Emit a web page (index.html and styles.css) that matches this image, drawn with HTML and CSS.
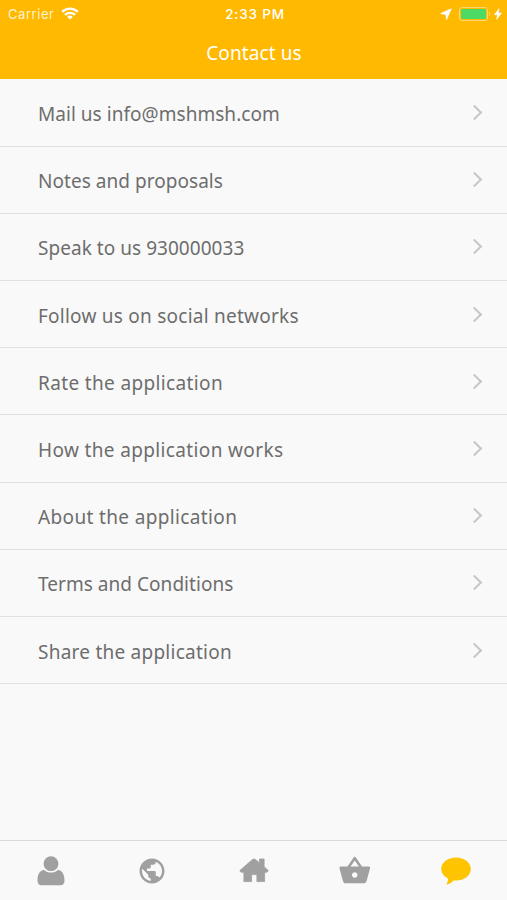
FILE: index.html
```html
<!DOCTYPE html>
<html lang="en">
<head>
    <meta charset="UTF-8">
    <meta name="viewport" content="width=device-width, initial-scale=1.0">
    <title>Contact us</title>
    <link rel="stylesheet" href="styles.css">
</head>
<body>
    <header class="header">
        <div class="status">
            <div class="status-left">
                <span>Carrier</span>
                <svg width="18" height="13" viewBox="0 0 18 13" fill="none" stroke="#fff" stroke-width="2.3">
                    <path d="M1.2 4.9a11 11 0 0 1 15.6 0M4 7.9a7.1 7.1 0 0 1 10 0"/>
                    <path d="M9 12.6L6.2 9.9a4 4 0 0 1 5.6 0z" fill="#fff" stroke="none"/>
                </svg>
            </div>
            <span class="time">2:33 PM</span>
            <div class="status-right">
                <svg class="location" width="12" height="12" viewBox="0 0 12 12" fill="#fff" stroke="#fff" stroke-width=".7" stroke-linejoin="round">
                    <path d="M11.3.7L.6 5.600l5.200.8.8 5.200z"/>
                </svg>
                <svg width="32" height="14" viewBox="0 0 32 14">
                    <rect x=".5" y=".5" width="28" height="13" rx="2.5" fill="none" stroke="#ffd970"/>
                    <rect x="2" y="2" width="25" height="10" rx="1" fill="#4cd964"/>
                    <path d="M30 5v4q1.400-.6 1.400-2T30 5z" fill="#ffd970"/>
                </svg>
                <svg width="8" height="12" viewBox="0 0 8 12" fill="#fff" stroke="#fff" stroke-width=".5">
                    <path d="M5 .5L.4 6.700h3L2.600 11.500 7.600 5h-3z"/>
                </svg>
            </div>
        </div>
        <h1>Contact us</h1>
    </header>

    <main class="list">
        <a class="row tight"><span>Mail us info@mshmsh.com</span><i class="arrow"></i></a>
        <a class="row tight"><span>Notes and proposals</span><i class="arrow"></i></a>
        <a class="row tight"><span>Speak to us 930000033</span><i class="arrow"></i></a>
        <a class="row"><span>Follow us on social networks</span><i class="arrow"></i></a>
        <a class="row wide"><span>Rate the application</span><i class="arrow"></i></a>
        <a class="row wide"><span>How the application works</span><i class="arrow"></i></a>
        <a class="row wide"><span>About the application</span><i class="arrow"></i></a>
        <a class="row tight"><span>Terms and Conditions</span><i class="arrow"></i></a>
        <a class="row"><span>Share the application</span><i class="arrow"></i></a>
    </main>

    <nav class="tabs">
        <a class="tab">
            <svg width="28" height="30" viewBox="0 0 28 30">
                <path d="M7 14c1.800 1.700 4.200 2.600 7 2.600s5.200-.9 7-2.600c4.500.2 6.500 5 6.500 10.500 0 3-1.500 4.800-4 4.800h-19C2 29.300.5 27.500.5 24.500.5 19 2.500 14.200 7 14z"/>
                <circle cx="14" cy="7.700" r="7.400"/>
            </svg>
        </a>
        <a class="tab">
            <svg width="30" height="30" viewBox="0 0 24 24">
                <path d="M12 2C6.480 2 2 6.480 2 12s4.480 10 10 10 10-4.480 10-10S17.520 2 12 2zm-1 17.930c-3.950-.49-7-3.850-7-7.930 0-.62.080-1.210.21-1.790L9 15v1c0 1.100.9 2 2 2v1.930zm6.900-2.540c-.26-.81-1-1.390-1.900-1.390h-1v-3c0-.55-.45-1-1-1H8v-2h2c.55 0 1-.45 1-1V7h2c1.100 0 2-.9 2-2v-.41c2.930 1.190 5 4.060 5 7.410 0 2.080-.8 3.970-2.100 5.390z"/>
            </svg>
        </a>
        <a class="tab">
            <svg width="30" height="25" viewBox="0 0 30 25" stroke="#a0a0a0" stroke-width=".8" stroke-linejoin="round">
                <path d="M.8 12.600L13.500 1.500q1.500-1.100 3 0l4 3.400V1h4.600v7.800l4.200 3.800-1.300 1.600H25.600v9.400h-7.700V16.600h-5.300v7H4.900v-9.400H2z"/>
            </svg>
        </a>
        <a class="tab">
            <svg width="33.500" height="33.500" viewBox="0 0 24 24">
                <path d="M17.210 9l-4.380-6.560c-.19-.28-.51-.42-.83-.42-.32 0-.64.140-.83.430L6.790 9H2c-.55 0-1 .45-1 1 0 .09.010.18.040.27l2.540 9.270c.23.840 1 1.460 1.920 1.460h13c.92 0 1.690-.62 1.930-1.460l2.540-9.270L23 10c0-.55-.45-1-1-1h-4.790zM9 9l3-4.400L15 9H9zm3 8c-1.100 0-2-.9-2-2s.9-2 2-2 2 .9 2 2-.9 2-2 2z"/>
            </svg>
        </a>
        <a class="tab active">
            <svg width="30" height="28" viewBox="0 0 30 28">
                <path d="M15 .6C23.300.6 29.800 5.700 29.800 12S23.300 23.600 15 23.600q-1.300 0-2.400-.2-2.600 3.200-6.300 4c-.7.100-.9-.3-.5-.9q1.300-1.900 1.400-4.800C3 19.600.2 16 .2 12 .2 5.700 6.700.6 15 .6z"/>
            </svg>
        </a>
    </nav>
</body>
</html>
```

FILE: styles.css
```css
body {
    margin: 0;
    height: 900px;
    display: flex;
    flex-direction: column;
    background: #f9f9f9;
    font-family: "Noto Sans", "Open Sans", sans-serif;
}
.header {
    height: 79px;
    background: #ffb900;
    color: #fff;
}
.status {
    display: grid;
    grid-template-columns: 1fr auto 1fr;
    align-items: center;
    height: 27px;
    padding: 0 5px 0 8px;
    font-family: Inter, sans-serif;
    font-size: 13px;
    letter-spacing: 0.55px;
}
.status-left, .status-right {
    display: flex;
    align-items: center;
    gap: 7px;
}
.status-left {
    color: #fff3cf;
}
.status-right {
    justify-content: flex-end;
    gap: 3px;
}
.location {
    margin-right: 4px;
}
.time {
    font-weight: 500;
    font-size: 13.5px;
    letter-spacing: 0.8px;
}
h1 {
    margin: 12px 0 0;
    padding-left: 1px;
    font-size: 19px;
    line-height: 28px;
    font-weight: 400;
    letter-spacing: 0.1px;
    text-align: center;
}
.list {
    flex: 1;
    padding-top: 0.5px;
}
.row {
    display: flex;
    align-items: center;
    justify-content: space-between;
    box-sizing: border-box;
    height: 67.2px;
    padding: 3px 27px 0 38px;
    border-bottom: 1px solid #e1e1e1;
    color: #6d6d6d;
    font-size: 19px;
    letter-spacing: 0.24px;
}
.tight {
    letter-spacing: 0.04px;
}
.wide {
    letter-spacing: 0.36px;
}
.arrow {
    width: 9px;
    height: 9px;
    margin-top: -3px;
    border: solid #c7c7c7;
    border-width: 2px 2px 0 0;
    transform: rotate(45deg);
}
.tabs {
    display: flex;
    box-sizing: border-box;
    height: 60px;
    border-top: 1px solid #d9d9d9;
}
.tab {
    flex: 1;
    display: flex;
    align-items: center;
    justify-content: center;
    fill: #a0a0a0;
}
.active {
    fill: #ffc400;
}
```
